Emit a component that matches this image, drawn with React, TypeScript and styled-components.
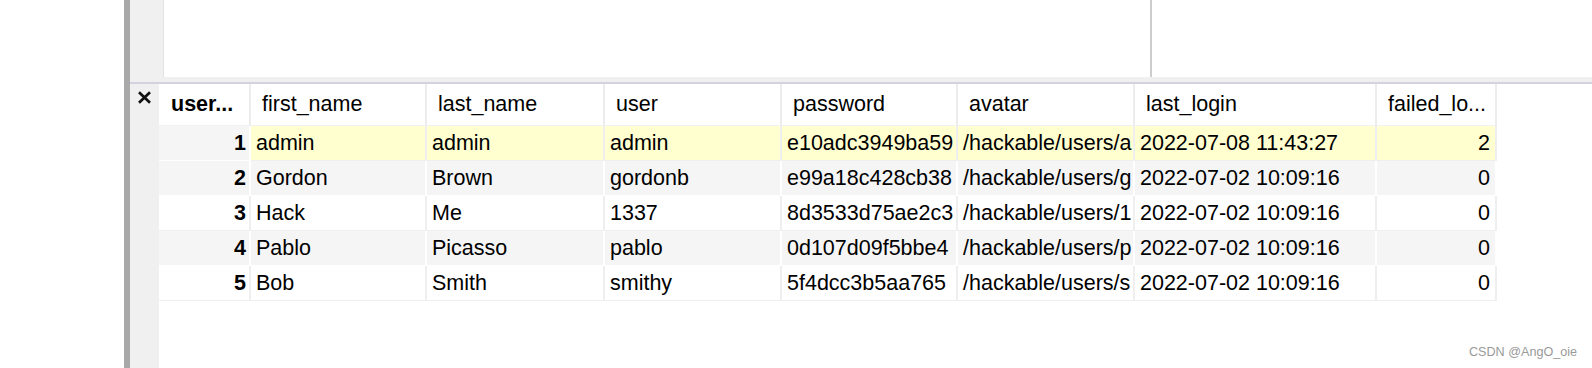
import React from "react";
import styled, { createGlobalStyle } from "styled-components";

const GlobalStyle = createGlobalStyle`
  body {
    margin: 0;
    background: #fff;
    font-family: "Liberation Sans", Arial, sans-serif;
  }
`;

type Tone = "white" | "grey" | "current";

const columns = [92, 176, 178, 177, 176, 177, 242, 120];

const headers = [
  "user...",
  "first_name",
  "last_name",
  "user",
  "password",
  "avatar",
  "last_login",
  "failed_lo...",
];

// only the part of each value that the narrow columns show
const rows = [
  ["1", "admin", "admin", "admin", "e10adc3949ba59", "/hackable/users/a", "2022-07-08 11:43:27", "2"],
  ["2", "Gordon", "Brown", "gordonb", "e99a18c428cb38", "/hackable/users/g", "2022-07-02 10:09:16", "0"],
  ["3", "Hack", "Me", "1337", "8d3533d75ae2c3", "/hackable/users/1", "2022-07-02 10:09:16", "0"],
  ["4", "Pablo", "Picasso", "pablo", "0d107d09f5bbe4", "/hackable/users/p", "2022-07-02 10:09:16", "0"],
  ["5", "Bob", "Smith", "smithy", "5f4dcc3b5aa765", "/hackable/users/s", "2022-07-02 10:09:16", "0"],
];

const Page = styled.div`
  position: relative;
  display: flex;
  width: 1592px;
  height: 368px;
  overflow: hidden;
  background: #fff;
`;

const OuterGap = styled.div`
  width: 124px;
  flex-shrink: 0;
`;

const Splitter = styled.div`
  width: 6px;
  flex-shrink: 0;
  background: #a9a9a9;
`;

const Workspace = styled.div`
  flex: 1;
  display: flex;
  flex-direction: column;
`;

const EditorPane = styled.div`
  display: flex;
  height: 77px;
`;

const PaneGutter = styled.div`
  width: 33px;
  background: #f0f0f0;
  border-right: 1px solid #e3e3e3;
`;

const PaneArea = styled.div<{ $width?: number }>`
  ${(p) => (p.$width ? `width: ${p.$width}px;` : "flex: 1;")}
  background: #fff;
`;

const PaneDivider = styled.div`
  width: 2px;
  background: #cdcdcd;
`;

const SplitBand = styled.div`
  height: 5px;
  background: #f0f0f0;
  border-bottom: 2px solid #d2d3df;
`;

const ResultArea = styled.div`
  flex: 1;
  display: flex;
`;

const ResultGutter = styled.div`
  width: 29px;
  background: #f0f0f0;
  display: flex;
  justify-content: center;
  padding-top: 5px;
  box-sizing: border-box;
`;

const CloseButton = styled.button`
  width: 16px;
  height: 16px;
  padding: 0;
  border: none;
  background: transparent;
  display: flex;
  align-items: center;
  justify-content: center;
`;

const Grid = styled.div`
  display: grid;
  grid-template-columns: ${columns.map((c) => `${c}px`).join(" ")};
  grid-auto-rows: min-content;
  align-content: start;
  font-size: 21.5px;
  color: #000;
`;

const HeaderCell = styled.div<{ $bold?: boolean }>`
  height: 41px;
  display: flex;
  align-items: center;
  padding-left: ${(p) => (p.$bold ? 12 : 11)}px;
  background: #fff;
  border-right: 2px solid #ececec;
  border-bottom: 1px solid #f2f2f2;
  font-weight: ${(p) => (p.$bold ? 700 : 400)};
  white-space: nowrap;
  overflow: hidden;
`;

const toneBg: Record<Tone, string> = {
  white: "#ffffff",
  grey: "#f5f5f5",
  current: "#ffffd0",
};

const Cell = styled.div<{ $tone: Tone; $align?: "left" | "right"; $bold?: boolean }>`
  height: 34px;
  display: flex;
  align-items: center;
  justify-content: ${(p) => (p.$align === "right" ? "flex-end" : "flex-start")};
  padding: ${(p) => (p.$bold ? "0 3px 0 0" : p.$align === "right" ? "0 5px 0 0" : "0 0 0 5px")};
  background: ${(p) => toneBg[p.$tone]};
  border-right: 2px solid ${(p) => (p.$tone === "grey" ? "#ffffff" : "#efefef")};
  border-bottom: 1px solid ${(p) => (p.$tone === "grey" ? "#ffffff" : "#efefef")};
  font-weight: ${(p) => (p.$bold ? 700 : 400)};
  white-space: nowrap;
  overflow: hidden;
`;

const Watermark = styled.div`
  position: absolute;
  right: 15px;
  bottom: 9px;
  font-family: "Liberation Sans", Arial, sans-serif;
  font-size: 12.6px;
  color: #9a9a9a;
`;

function App() {
  return (
    <Page>
      <GlobalStyle />
      <OuterGap />
      <Splitter />
      <Workspace>
        <EditorPane>
          <PaneGutter />
          <PaneArea $width={986} />
          <PaneDivider />
          <PaneArea />
        </EditorPane>
        <SplitBand />
        <ResultArea>
          <ResultGutter>
            <CloseButton aria-label="Close results">
              <svg width="15" height="13" viewBox="0 0 15 13">
                <path d="M2 1.2 L13 11.8 M13 1.2 L2 11.8" stroke="#111" strokeWidth="2.7" />
              </svg>
            </CloseButton>
          </ResultGutter>
          <Grid>
            {headers.map((h, i) => (
              <HeaderCell key={h} $bold={i === 0}>
                {h}
              </HeaderCell>
            ))}
            {rows.map((row, r) => {
              const tone: Tone = r % 2 === 1 ? "grey" : "white";
              return row.map((value, c) => {
                const cellTone: Tone = r === 0 ? (c === 0 ? "grey" : "current") : tone;
                return (
                  <Cell
                    key={`${r}-${c}`}
                    $tone={cellTone}
                    $bold={c === 0}
                    $align={c === 0 || c === 7 ? "right" : "left"}
                  >
                    {value}
                  </Cell>
                );
              });
            })}
          </Grid>
        </ResultArea>
      </Workspace>
      <Watermark>CSDN @AngO_oie</Watermark>
    </Page>
  );
}

export default App;
